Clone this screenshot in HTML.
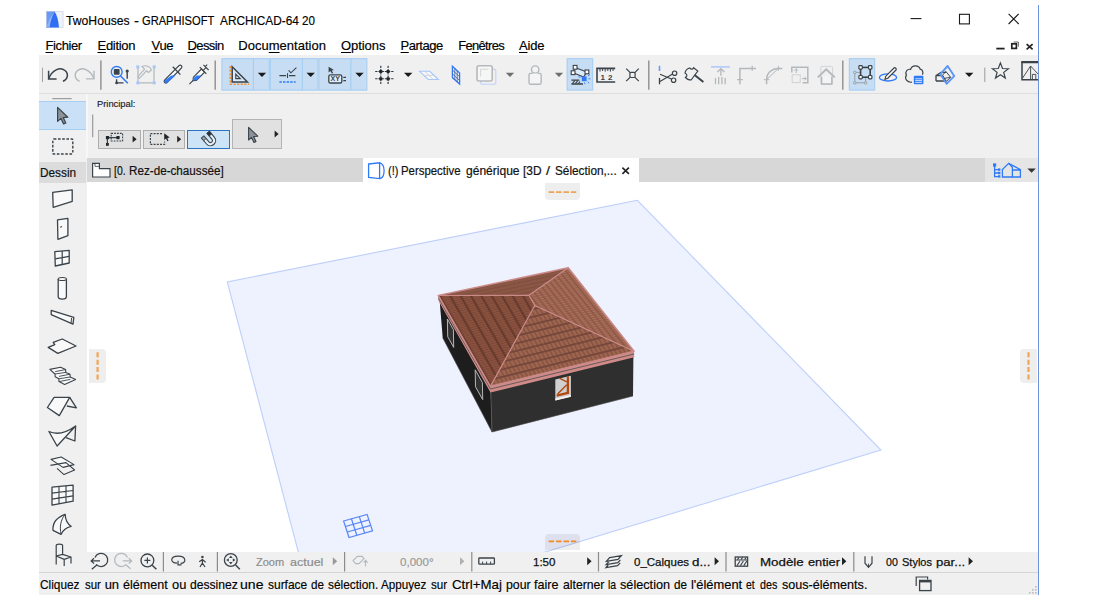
<!DOCTYPE html>
<html lang="fr">
<head>
<meta charset="utf-8">
<title>TwoHouses - GRAPHISOFT ARCHICAD-64 20</title>
<style>
html,body{margin:0;padding:0;}
body{width:1094px;height:607px;background:#fff;position:relative;overflow:hidden;font-family:"Liberation Sans",sans-serif;font-size:13px;color:#000;}
.abs{position:absolute;}
.t{position:absolute;white-space:nowrap;line-height:16px;height:16px;-webkit-text-stroke:0.18px #000;}
.g{background:#f0f0f0;}
.tl{position:absolute;left:0;white-space:nowrap;line-height:16px;height:16px;}
.tl span{position:absolute;top:0;transform-origin:0 50%;}
u{text-decoration:underline;text-underline-offset:1.5px;}
.hl{position:absolute;background:#c7dff5;border:1px solid #9dcbf0;box-sizing:border-box;}
.sep{position:absolute;width:1px;background:#8c8c8c;}
svg{position:absolute;overflow:visible;}
#scene{overflow:hidden;}
</style>
</head>
<body>
<!-- TITLE BAR -->
<!-- MENU -->
<div id="menu">
<div class="t" style="left:45.5px;top:38px;letter-spacing:-0.4px;"><u>F</u>ichier</div>
<div class="t" style="left:97.5px;top:38px;letter-spacing:-0.3px;"><u>E</u>dition</div>
<div class="t" style="left:151.5px;top:38px;letter-spacing:-0.3px;"><u>V</u>ue</div>
<div class="t" style="left:187.5px;top:38px;letter-spacing:-0.6px;"><u>D</u>essin</div>
<div class="t" style="left:238.3px;top:38px;letter-spacing:0.02px;">Docu<u>m</u>entation</div>
<div class="t" style="left:341px;top:38px;letter-spacing:-0.06px;"><u>O</u>ptions</div>
<div class="t" style="left:400.6px;top:38px;letter-spacing:-0.5px;"><u>P</u>artage</div>
<div class="t" style="left:458.2px;top:38px;letter-spacing:-0.69px;">Fe<u>n</u>êtres</div>
<div class="t" style="left:519px;top:38px;letter-spacing:-0.18px;"><u>A</u>ide</div>
</div>
<!-- TOOLBAR -->
<div id="toolbar" class="abs g" style="left:39px;top:55px;width:999px;height:38px;"></div>
<div class="abs" style="left:39px;top:93px;width:999px;height:1px;background:#dedede;"></div>
<!-- INFO BOX + LEFT PANEL -->
<div id="info" class="abs g" style="left:39px;top:94px;width:999px;height:64px;"></div>
<div id="left" class="abs g" style="left:39px;top:158px;width:48px;height:414px;"></div>
<div class="abs" style="left:86.4px;top:94px;width:1.6px;height:64px;background:#f7f7f7;"></div>
<!-- TAB BAR -->
<div id="tabbar" class="abs" style="left:87px;top:158px;width:951px;height:24px;background:#d7d7d7;"></div>
<!-- CANVAS -->
<div id="canvas" class="abs" style="left:87px;top:182px;width:951px;height:370px;background:#fff;overflow:hidden;"></div>

<!-- 3D SCENE -->
<svg id="scene" style="left:87px;top:182px" width="951" height="369.5" viewBox="87 182 951 369.5" fill="none">
<defs>
<pattern id="pFL" width="2.4" height="9.4" patternUnits="userSpaceOnUse" patternTransform="matrix(0.4973 0.8676 0.9714 -0.2374 490.4 386.4)">
<rect width="2.4" height="9.4" fill="#8d5341"/><rect width="1.0" height="9.4" fill="#7a4636"/><rect y="0" width="2.4" height="2.2" fill="#673a2d"/></pattern>
<pattern id="pFR" width="4.2" height="7.6" patternUnits="userSpaceOnUse" patternTransform="matrix(0.9714 -0.2374 0.4973 0.8676 490.4 386.4)">
<rect width="4.2" height="7.6" fill="#9d6450"/><rect width="1.5" height="7.6" fill="#87533f"/><rect y="0" width="4.2" height="1.8" fill="#74453a"/></pattern>
<pattern id="pBR" width="2.6" height="5.3" patternUnits="userSpaceOnUse" patternTransform="matrix(0.6189 0.7854 0.9780 -0.2086 634 351.3)">
<rect width="2.6" height="5.3" fill="#a96d58"/><rect width="1.0" height="5.3" fill="#96604d"/><rect y="0" width="2.6" height="1.5" fill="#8a5646"/></pattern>
<pattern id="pBL" width="2.4" height="4.2" patternUnits="userSpaceOnUse" patternTransform="matrix(0.9780 -0.2086 0.6189 0.7854 438.3 295.5)">
<rect width="2.4" height="4.2" fill="#8e5846"/><rect width="1.0" height="4.2" fill="#875342"/><rect y="0" width="2.4" height="1.2" fill="#7d4e3f"/></pattern>
</defs>
<!-- ground -->
<polygon points="637.4,200.3 227.3,282 316.6,621.6 880.9,450" fill="#eef2fe" stroke="#bdcffa" stroke-width="1.1"/>
<!-- ground grid marker -->
<g stroke="#4a7cf6" stroke-width="1.25" opacity="0.9">
<polygon points="343.6,521 367.1,514.4 372.5,530.9 349,537.5"/>
<path d="M351.4 518.8 L356.8 535.3 M359.3 516.6 L364.7 533.1 M345.4 526.5 L368.9 519.9 M347.2 532 L370.7 525.4"/>
</g>
<!-- walls -->
<polygon points="439.6,300.0 490.6,390.0 492.0,432.0 442.7,337.8" fill="#1d1d1d"/>
<polygon points="490.6,390.0 633.4,355.5 633.0,396.0 492.0,432.0" fill="#2f2f2f"/>
<path d="M490.8 390 L492 432" stroke="#555" stroke-width="0.8"/>
<path d="M442.7 337.8 L492 432 L633 396" stroke="#444" stroke-width="0.6"/>
<!-- left wall windows -->
<polygon points="447.4,319 453.4,329.6 453.7,347.4 447.7,336.6" fill="#333" stroke="#c4c4c4" stroke-width="0.9"/>
<polygon points="475.2,369.8 482.4,382.6 482.7,399.6 475.5,386.8" fill="#333" stroke="#c4c4c4" stroke-width="0.9"/>
<!-- front window -->
<polygon points="555.3,379.4 570.9,375.7 570.9,396.7 555.3,400.4" fill="#d0d0d0"/>
<polygon points="555.3,398.6 570.9,394.9 570.9,396.7 555.3,400.4" fill="#f2f2f2"/>
<path d="M567.9 376.4 V393.2" stroke="#b04a10" stroke-width="2.3"/>
<path d="M556.6 395.6 L569 392.6" stroke="#b04a10" stroke-width="2.4"/>
<path d="M566.8 384.7 L557.6 394 M559.8 378.3 L566.8 381.8" stroke="#b04a10" stroke-width="1.4"/>
<!-- fascia -->
<polygon points="438.3,295.5 490.4,386.4 634,351.3 634.2,357.3 490.5,392.4 438.3,300.4" fill="#d08b89"/>
<path d="M438.4 298 L490.5 389 L634.1 354" stroke="#5a5452" stroke-width="0.9" fill="none"/>
<!-- roof planes -->
<polygon points="438.3,295.5 490.4,386.4 534.8,305.5 529.0,295.3" fill="url(#pFL)"/>
<polygon points="490.4,386.4 634.0,351.3 534.8,305.5" fill="url(#pFR)"/>
<polygon points="568.2,267.8 634.0,351.3 534.8,305.5 529.0,295.3" fill="url(#pBR)"/>
<polygon points="438.3,295.5 568.2,267.8 529.0,295.3" fill="url(#pBL)"/>
<!-- hips and edges -->
<g stroke="#ca8a88" stroke-width="1.2" stroke-linejoin="round">
<path d="M438.3 295.5 L529 295.3 L568.2 267.8 M529 295.3 L534.8 305.5 L490.4 386.4 M534.8 305.5 L634 351.3"/>
<path d="M438.3 295.5 L490.4 386.4 L634 351.3 L568.2 267.8 Z" stroke-width="1.6"/>
</g>
</svg>

<!-- INFO BOX / TABS / LEFT PANEL CONTENT -->
<div class="abs" style="left:39px;top:101.2px;width:47.4px;height:28.6px;background:#c9e0f6;border-top:1px solid #a6cdf2;border-bottom:1px solid #a6cdf2;box-sizing:border-box;"></div>
<div class="abs" style="left:39px;top:162px;width:47px;height:21px;background:#dcdcdc;"></div>
<div class="abs" style="left:98.2px;top:130.2px;width:42.5px;height:18.8px;background:#e1e1e1;border:1px solid #adadad;box-sizing:border-box;"></div>
<div class="abs" style="left:142.8px;top:130.2px;width:42.2px;height:18.8px;background:#e1e1e1;border:1px solid #adadad;box-sizing:border-box;"></div>
<div class="abs" style="left:187.2px;top:130.2px;width:42.5px;height:18.8px;background:#cde4f7;border:1.2px solid #2a74c4;box-sizing:border-box;"></div>
<div class="abs" style="left:232.1px;top:119.4px;width:50.4px;height:29.6px;background:#e1e1e1;border:1px solid #b4b4b4;box-sizing:border-box;"></div>
<!-- tabs -->
<div class="abs" style="left:363.3px;top:158.4px;width:275.4px;height:24px;background:#fff;"></div>
<div class="abs" style="left:985.3px;top:158px;width:52.7px;height:24px;background:#e5e5e5;"></div>
<!-- drag handles -->
<div class="abs" style="left:545.4px;top:183px;width:34.2px;height:17px;background:rgba(0,0,0,0.065);border-radius:0 0 4px 4px;"></div>
<div class="abs" style="left:545.4px;top:533.5px;width:34.2px;height:16.3px;background:rgba(0,0,0,0.065);border-radius:4px 4px 0 0;"></div>
<div class="abs" style="left:88.8px;top:348.9px;width:17.1px;height:34px;background:rgba(0,0,0,0.065);border-radius:0 4px 4px 0;"></div>
<div class="abs" style="left:1020.3px;top:348.9px;width:16.8px;height:34px;background:rgba(0,0,0,0.065);border-radius:4px 0 0 4px;"></div>
<svg id="midicons" style="left:0;top:0" width="1094" height="607" viewBox="0 0 1094 607" fill="none">
<!-- handles dashes -->
<g stroke="#f4a352" stroke-width="1.8" stroke-dasharray="5.5 1.95">
<path d="M548.6 192.1 H576.3"/><path d="M548.6 541.4 H576.3" stroke="#f28c22"/></g>
<g stroke="#f4a352" stroke-width="2.2" stroke-dasharray="5 2.4"><path d="M97.6 352.3 V380"/><path d="M1028.5 352.3 V380"/>
</g>
<!-- left panel top line -->
<path d="M52.3 98.7 H71.7" stroke="#8c8c8c" stroke-width="1"/>
<!-- arrow tool -->
<path d="M57.6 107.4 V121.4 L61 118.4 L63.6 124 L65.8 123 L63.2 117.6 L67.8 117.2 Z" fill="#8d9398" stroke="#3a434a" stroke-width="1.2" stroke-linejoin="round"/>
<!-- marquee -->
<rect x="52.8" y="139" width="20" height="15" rx="1" stroke="#3a434a" stroke-width="1.4" stroke-dasharray="2.6 1.6"/>
<!-- info box vertical line -->
<path d="M92.7 114.4 V137.2" stroke="#9a9a9a" stroke-width="1.2"/>
<!-- btn1 icon -->
<rect x="111.2" y="133.4" width="11.4" height="7.6" stroke="#3a434a" stroke-width="1.1" stroke-dasharray="1.8 1.1"/>
<path d="M107.4 144.4 V137.6 H118" stroke="#3a434a" stroke-width="1.2"/>
<g fill="#1f262b"><rect x="105.9" y="136" width="3.2" height="3.2"/><rect x="116.4" y="136" width="3.2" height="3.2"/><rect x="106" y="143" width="2.8" height="2.8"/></g>
<path d="M132.6 135.8 L136.6 139.2 L132.6 142.6 Z" fill="#222"/>
<!-- btn2 icon -->
<path d="M162 133.6 H150.4 V144.4 H164.6 V141.6" stroke="#3a434a" stroke-width="1.2" stroke-dasharray="2 1.2"/>
<path d="M164.2 133.2 V140 L166 138.6 L167.4 141.2 L168.6 140.6 L167.3 138 L169.8 137.6 Z" fill="#1f262b"/>
<path d="M177.2 135.8 L181.2 139.2 L177.2 142.6 Z" fill="#222"/>
<!-- btn3 magnet -->
<g transform="rotate(-40 209.6 139.6)">
<path d="M204.4 133.2 V141 C204.4 147.6 214.8 147.6 214.8 141 V133.2 H211.6 V141 C211.6 143.6 207.6 143.6 207.6 141 V133.2 Z" stroke="#3a434a" stroke-width="1.1" fill="#e8f1fa"/>
<rect x="204.4" y="133.2" width="3.2" height="3.4" fill="#9aa0a4" stroke="#3a434a" stroke-width="0.8"/><rect x="211.6" y="133.2" width="3.2" height="3.4" fill="#2a3136" stroke="#3a434a" stroke-width="0.8"/>
</g>
<!-- btn4 cursor -->
<path d="M248.6 127.4 V140 L251.6 137.4 L254 142.4 L256 141.4 L253.6 136.6 L257.8 136.2 Z" fill="#8d9398" stroke="#3a434a" stroke-width="1.1" stroke-linejoin="round"/>
<path d="M274.6 130.6 L278.6 134 L274.6 137.4 Z" fill="#222"/>
<!-- tab1 icon -->
<path d="M92.6 177 V163.4 H99.4 V168.6 H110 V177 Z" stroke="#3a434a" stroke-width="1.2" fill="#fff"/>
<path d="M95 163.6 V166.4 H99.2" stroke="#3a434a" stroke-width="0.8"/>
<!-- tab2 icon -->
<path d="M368.6 164 L379.6 162.8 V178.6 L368.6 177.4 Z" stroke="#2f7af5" stroke-width="1.3" fill="#fff"/>
<path d="M379.6 162.8 C385.6 164 385.6 177.4 379.6 178.6" stroke="#2f7af5" stroke-width="1.3"/>
<!-- tab close -->
<path d="M622.4 167.6 L628.9 173.8 M628.9 167.6 L622.4 173.8" stroke="#222" stroke-width="1.6"/>
<!-- nav icon right -->
<g stroke="#2f7af5" stroke-width="1.3">
<path d="M994.6 165.4 V176.6 H998.6 M994.6 169.6 H998.6 M994.6 173 H998.6"/>
<rect x="993" y="163.4" width="3.2" height="3.2" fill="#2f7af5" stroke="none"/>
<rect x="998" y="168.4" width="2.4" height="2.4" fill="#2f7af5" stroke="none"/><rect x="998" y="171.8" width="2.4" height="2.4" fill="#2f7af5" stroke="none"/><rect x="998" y="175.2" width="2.4" height="2.4" fill="#2f7af5" stroke="none"/>
<path d="M1002.4 177 V169.6 L1008.6 163.4 L1012.4 167.2 V177 Z"/>
<path d="M1008.6 163.4 L1020.4 169.6 V177 H1012.4 M1012.4 170 H1020.4"/>
</g>
<path d="M1027.4 168.4 H1035.8 L1031.6 172.8 Z" fill="#333"/>
</svg>
<!-- BOTTOM BAR -->
<div id="bbar" class="abs g" style="left:87px;top:551.5px;width:951px;height:20.5px;"></div>
<div class="abs" style="left:39px;top:571.5px;width:999px;height:1px;background:#d5d5d5;"></div>
<!-- STATUS BAR -->
<div id="status" class="abs g" style="left:39px;top:572.5px;width:999px;height:22px;"></div>

<!-- TOP ICONS -->
<svg id="topicons" style="left:0;top:0" width="1094" height="607" viewBox="0 0 1094 607" fill="none" stroke-linecap="butt">
<defs>
<linearGradient id="lg1" x1="0" y1="0" x2="1" y2="1"><stop offset="0" stop-color="#5a8df2"/><stop offset="0.5" stop-color="#a9c4f8"/><stop offset="1" stop-color="#ffffff"/></linearGradient>
</defs>
<!-- app icon -->
<rect x="46.3" y="11.3" width="16.8" height="16.4" fill="#eef2fc" stroke="#c9cfdd" stroke-width="0.6"/>
<path d="M46.6 11.6 H55 Q50 17 46.6 27.4 Z" fill="#6a9af3"/>
<path d="M46.6 27.4 Q50.5 14 54.6 11.8 Q58 16 59 27.4 Z" fill="#2f6ff2"/>
<path d="M46.6 27.4 Q49.5 16 54.6 11.8 Q51 18 49.6 27.4 Z" fill="#8fb3f7"/>
<!-- window controls -->
<g stroke="#1a1a1a" stroke-width="1.1">
<path d="M910.6 18.6 H921.4"/>
<rect x="959.5" y="14.3" width="9.9" height="9.6"/>
<path d="M1008.6 13.9 L1018.7 24 M1018.7 13.9 L1008.6 24"/>
</g>
<!-- MDI controls -->
<g stroke="#222" stroke-width="1.6">
<path d="M996.3 48.6 H1004.6" stroke-width="1.8"/>
<rect x="1011.8" y="43.8" width="4.6" height="4.6" stroke-width="1.7"/>
<path d="M1013.6 42 H1018.4 V46.6" stroke-width="0.9" stroke="#555"/>
<path d="M1026.6 44.2 L1032.6 49.4 M1032.6 44.2 L1026.6 49.4" stroke-width="1.7"/>
</g>
</svg>

<!-- TOOLBAR ICONS -->
<svg id="tbicons" style="left:0;top:0" width="1094" height="607" viewBox="0 0 1094 607" fill="none" stroke-linecap="butt" stroke-linejoin="miter">
<!-- grip -->
<path d="M42.5 67.8 V82" stroke="#a0a0a0" stroke-width="1"/>
<!-- undo -->
<path d="M48.6 78.8 C52 70 60 66.5 65 70.5 C69.5 74.5 67 80 63 81.3" stroke="#3a434a" stroke-width="1.5"/>
<path d="M48.6 70.8 V78.9 H56.6" stroke="#3a434a" stroke-width="1.5"/>
<!-- redo -->
<path d="M94 78.8 C90.6 70 82.6 66.5 77.6 70.5 C73.1 74.5 75.6 80 79.6 81.3" stroke="#b3b8bc" stroke-width="1.4"/>
<path d="M94 70.8 V78.9 H86" stroke="#b3b8bc" stroke-width="1.4"/>
<!-- separators -->
<g stroke="#8e8e8e" stroke-width="1.4"><path d="M100.9 60.5 V89.7 M215.2 60.5 V89.7 M648.8 60.5 V89.7 M842.8 60.5 V89.7"/></g>
<path d="M984.8 67.6 V82.1" stroke="#9a9a9a" stroke-width="1"/>
<!-- find & select -->
<rect x="113.8" y="69" width="5.8" height="5.8" rx="1" fill="#3a434a"/>
<circle cx="116.7" cy="71.9" r="5.4" stroke="#2f7af5" stroke-width="1.4"/>
<path d="M120.6 76 L127.8 83.2" stroke="#2f7af5" stroke-width="1.6"/>
<path d="M127.2 71 V78.8" stroke="#3a434a" stroke-width="1.4"/><circle cx="127.2" cy="71" r="1.6" fill="#3a434a"/>
<path d="M116.6 79.2 V82.9 H123.5" stroke="#3a434a" stroke-width="1.4"/><circle cx="116.6" cy="82.9" r="1.4" fill="#3a434a"/>
<!-- hammer/selection (gray) -->
<path d="M138 67.5 V82.9 H154 V67.5" stroke="#b3b8bc" stroke-width="1.2"/>
<path d="M142 66.5 C146 64.8 150 66.5 151.5 70 L148.5 72.5 L146.5 70.8 L139.5 78.3 L137.8 76.7 L144.6 69.2 Z" stroke="#b3b8bc" stroke-width="1.1" fill="#f0f0f0"/>
<g fill="#a6c6fb"><rect x="136.3" y="65.4" width="3" height="3"/><rect x="152.7" y="65.4" width="3" height="3"/><rect x="136.3" y="81.4" width="3" height="3"/><rect x="152.7" y="81.4" width="3" height="3"/></g>
<!-- eyedropper -->
<path d="M176.5 68.2 L164.6 80.2 C163.2 81.8 165.4 84 167 82.5 L179 70.6" stroke="#3a434a" stroke-width="1.2" fill="#fafafa"/>
<path d="M171.5 75.6 L175.6 75.6 L167 83 C165.4 84 163.6 82 164.8 80.6 Z" fill="#2f7af5"/>
<path d="M176 68.6 L179.2 65.5 C180.6 64.2 182.8 66.2 181.5 67.8 L178.5 71" stroke="#3a434a" stroke-width="1.2" fill="#fafafa"/>
<path d="M172.8 66.8 L180.4 74.6" stroke="#3a434a" stroke-width="1.3"/>
<!-- syringe -->
<path d="M201.5 69 L193.4 77.2 L193 80.6 L196.4 80.4 L204.6 72.2 Z" stroke="#3a434a" stroke-width="1.1" fill="#fafafa"/>
<path d="M196.6 75.6 L201.2 75.6 L196.4 80.4 L193 80.6 L193.4 78.2 Z" fill="#2f7af5"/>
<path d="M193.2 80.4 L189.4 84.2" stroke="#3a434a" stroke-width="1.1"/>
<path d="M199.8 67.2 L206.4 73.8 M203 70.6 L206.4 67.2 M203.4 64.8 L208.6 70 M205.4 66.4 L207.2 64.6" stroke="#3a434a" stroke-width="1.1"/>
<!-- highlight group 1 -->
<rect x="221.9" y="58.7" width="47.400000000000006" height="31.4" fill="#c6ddf3" stroke="#a2ccf2" stroke-width="1"/><path d="M253.4 58.7 V90.1" stroke="#a2ccf2" stroke-width="1"/>
<path d="M230.2 66 V84.3 H249.2" stroke="#f2963a" stroke-width="1.6" stroke-dasharray="2.2 1.4"/>
<path d="M232.2 66.8 V82 H247.4 Z" stroke="#3a434a" stroke-width="1.5" fill="#dcebf9"/>
<path d="M235.8 74.2 V78.6 H240.2 Z" stroke="#3a434a" stroke-width="1.2"/>
<path d="M257.8 72.8 H266.2 L262 77 Z" fill="#1a1a1a" stroke="none"/>
<!-- highlight group 2 -->
<rect x="270.3" y="58.7" width="47.599999999999966" height="31.4" fill="#c6ddf3" stroke="#a2ccf2" stroke-width="1"/><path d="M302.3 58.7 V90.1" stroke="#a2ccf2" stroke-width="1"/>
<path d="M279.4 75.6 H286 M289 75.6 H295.4 M287.5 73.2 V78" stroke="#3a434a" stroke-width="1.1"/>
<path d="M288.6 70.4 L290.9 72.8 L296.4 67.6" stroke="#3a434a" stroke-width="1.1"/>
<path d="M279.4 82 H295.6" stroke="#2f7af5" stroke-width="1.4" stroke-dasharray="2.4 1.2"/>
<path d="M306.5 72.8 H314.9 L310.7 77 Z" fill="#1a1a1a" stroke="none"/>
<!-- highlight group 3 -->
<rect x="318.9" y="58.7" width="48.0" height="31.4" fill="#c6ddf3" stroke="#a2ccf2" stroke-width="1"/><path d="M350.9 58.7 V90.1" stroke="#a2ccf2" stroke-width="1"/>
<path d="M328.6 66.8 V72.6 L330.3 71 L332 73.6 L333.2 72.9 L331.7 70.4 L333.9 70 Z" fill="#3a434a"/>
<rect x="328.8" y="74.8" width="13" height="8.2" rx="1.6" stroke="#3a434a" stroke-width="1.3" fill="#e4eef9"/>
<path d="M343.3 77.4 H346 M343.3 80.6 H346" stroke="#3a434a" stroke-width="1.2"/>
<text x="330.6" y="81.4" font-family="Liberation Sans, sans-serif" font-weight="bold" font-size="6.4" fill="#3a434a" stroke="none" textLength="9.4" lengthAdjust="spacingAndGlyphs">XY</text>
<path d="M355.3 72.8 H363.7 L359.5 77 Z" fill="#1a1a1a" stroke="none"/>
<!-- grid snap -->
<g stroke="#2c343a" stroke-width="1.1" stroke-dasharray="2.3 0.9"><path d="M380.8 65.8 V84 M388.1 65.8 V84 M375.2 71.5 H393.8 M375.2 78.8 H393.8"/></g>
<g fill="#1f262b"><rect x="379.3" y="70" width="3" height="3"/><rect x="386.6" y="70" width="3" height="3"/><rect x="379.3" y="77.3" width="3" height="3"/><rect x="386.6" y="77.3" width="3" height="3"/></g>
<path d="M404.0 72.8 H412.4 L408.2 77 Z" fill="#1a1a1a" stroke="none"/>
<!-- editing plane (light) -->
<path d="M419.6 71.3 H429.8 L438.4 79.5 H428.2 Z" stroke="#a6c6fb" stroke-width="1.1" fill="#f6f8fc"/>
<path d="M423.9 75.4 H434.1 M424.7 71.3 L433.3 79.5" stroke="#cfd3d6" stroke-width="0.9"/>
<!-- vertical grid blue -->
<path d="M452.4 66.2 L459.6 73 V84 L452.4 77.6 Z" stroke="#2f7af5" stroke-width="1.3" fill="#f4f4f4"/>
<path d="M454.8 68.6 V79.8 M457.2 70.8 V82 M452.4 70 L459.6 76.8 M452.4 73.8 L459.6 80.4" stroke="#3c5a9a" stroke-width="0.8"/>
<!-- layered squares gray -->
<rect x="480.6" y="69.4" width="15.2" height="14.8" rx="1.5" stroke="#bcd3f8" stroke-width="1.1"/>
<rect x="477" y="65.8" width="15.2" height="15.2" rx="2" stroke="#b6b9bc" stroke-width="1.6" fill="#f6f6f6"/>
<path d="M480.6 76.6 V69.2 H488.4" stroke="#cfd2d4" stroke-width="0.9"/>
<path d="M505.8 72.8 H514.2 L510 77 Z" fill="#6f6f6f" stroke="none"/>
<!-- lock gray -->
<circle cx="535.2" cy="69.6" r="3.7" stroke="#b3b8bc" stroke-width="1.4" fill="#f4f4f4"/>
<path d="M532.6 73.4 H530.6 C529.6 73.4 529 74 529 75 V82.6 C529 83.6 529.6 84.2 530.6 84.2 H539.6 C540.6 84.2 541.2 83.6 541.2 82.6 V75 C541.2 74 540.6 73.4 539.6 73.4 H537.8" stroke="#b3b8bc" stroke-width="1.4" fill="#f4f4f4"/>
<path d="M554.8 72.8 H563.2 L559 77 Z" fill="#6f6f6f" stroke="none"/>
<!-- highlight: trace -->
<rect x="567.1" y="58.7" width="25.600000000000023" height="31.4" fill="#c6ddf3" stroke="#a2ccf2" stroke-width="1"/>
<path d="M575 67.4 L586.8 72 L583.6 77 L573.2 72.8 Z" stroke="#3a434a" stroke-width="1.1" fill="#dcebf9"/>
<g stroke="#3a434a" stroke-width="1.1" fill="#fff"><rect x="573.2" y="65.4" width="3.8" height="3.8"/><rect x="571.2" y="70.8" width="3.8" height="3.8"/><rect x="585" y="70" width="3.8" height="3.8"/></g>
<rect x="581.8" y="76.4" width="4.8" height="4.8" fill="#2f7af5"/>
<path d="M588 76 L590 74.6 M588.4 78.8 H590.4 M587.6 81.8 L589.2 83.2 M584.4 82.4 L585 84.2 M580.4 77.4 L578.4 76.8" stroke="#2f7af5" stroke-width="0.9"/>
<path d="M571.4 80.2 H579.4 M571.4 84 H583" stroke="#3a434a" stroke-width="1.3"/>
<path d="M572.4 83.6 L575 80.4 M575.4 83.6 L578 80.4 M578.4 83.6 L580 81.6" stroke="#3a434a" stroke-width="1.1"/>
<!-- ruler 12 -->
<path d="M615.2 68.4 H597 V82 H615.2" stroke="#3a434a" stroke-width="1.6"/>
<path d="M600 69 V71.6 M602.6 69 V71 M605.2 69 V71.6 M607.8 69 V71 M610.4 69 V71.6 M613 69 V71" stroke="#3a434a" stroke-width="1"/>
<text x="600.4" y="80.3" font-family="Liberation Sans, sans-serif" font-weight="bold" font-size="8" fill="#3a434a" stroke="none" textLength="12" lengthAdjust="spacing">12</text>
<!-- explode X -->
<path d="M626.2 68.6 L638.8 81.2 M638.8 68.6 L626.2 81.2" stroke="#3a434a" stroke-width="1.2"/>
<rect x="629.9" y="72.3" width="5.2" height="5.2" rx="1.2" stroke="#3a434a" stroke-width="1.2" fill="#f0f0f0"/>
<!-- scissors -->
<path d="M659.5 65.8 V71" stroke="#6a9df8" stroke-width="1.6"/><path d="M659.5 77.9 V84.3" stroke="#3a434a" stroke-width="1.3"/>
<path d="M660 74.2 L671.4 79 M660 81.6 L672.6 74" stroke="#3a434a" stroke-width="1.2"/>
<circle cx="674.6" cy="73.2" r="2.2" stroke="#3a434a" stroke-width="1.2"/><circle cx="673.6" cy="80.2" r="2.2" stroke="#3a434a" stroke-width="1.2"/>
<!-- axe -->
<path d="M689.6 68 C691.6 69.8 693 69.2 693.6 67.8 L697.8 71 L694 76 L691.2 80 C689 80 686.6 79 685.4 77.4 C687.4 76.4 687.6 74.8 685 73 C685.4 70.8 687.4 68.6 689.6 68 Z" stroke="#3a434a" stroke-width="1.2" fill="#f0f0f0"/>
<path d="M694.6 75 L703.4 82" stroke="#3a434a" stroke-width="2"/>
<!-- adjust (gray) -->
<path d="M711 66.9 H729.8" stroke="#a6c6fb" stroke-width="1.4"/>
<path d="M720.9 68.6 V75.8 M717.4 72 L720.9 68.6 L724.4 72" stroke="#b3b8bc" stroke-width="1.3"/>
<path d="M715.5 78 V84.3 M718.7 77 V84.3 M721.9 77 V84.3 M725.2 78 V84.3" stroke="#b3b8bc" stroke-width="1.3"/>
<!-- corner (gray) -->
<path d="M739.9 84.3 V68.4 H756" stroke="#b3b8bc" stroke-width="1.5"/>
<path d="M752.2 65.8 V70.8 M737.1 79.7 H742.7" stroke="#b3b8bc" stroke-width="1.2"/>
<!-- arc (gray) -->
<path d="M766.6 84.3 V79.8 C766.6 73 771.8 68.4 778.6 68.4 H782.4" stroke="#b3b8bc" stroke-width="1.5"/>
<path d="M778.4 65.8 V70.8 M763.8 79.7 H769.4 M766.8 79.4 L778.2 68.6" stroke="#b3b8bc" stroke-width="1"/>
<!-- squares arrows (gray) -->
<path d="M791.8 72.4 V67.2 H807.8 V82.8 H802.6" stroke="#b3b8bc" stroke-width="1.5"/>
<rect x="792.2" y="74.8" width="8" height="7.8" stroke="#cfd2d4" stroke-width="1"/>
<path d="M796.2 73 V68.8 M794.4 70.6 L796.2 68.8 L798 70.6 M802 78.6 H806.2 M804.4 76.8 L806.2 78.6 L804.4 80.4" stroke="#b3b8bc" stroke-width="1"/>
<!-- house (gray) -->
<rect x="820.8" y="66.4" width="11.8" height="17.8" rx="1" stroke="#d2d4d6" stroke-width="1"/>
<path d="M821.6 76.4 V84 H831.8 V76.4" stroke="#b3b8bc" stroke-width="1.4" fill="#f4f4f4"/>
<path d="M817.8 77.4 L826.2 69.4 L834.8 77.4" stroke="#b3b8bc" stroke-width="1.9"/>
<!-- highlight: group -->
<rect x="849.3" y="58.7" width="25.40000000000009" height="31.4" fill="#c6ddf3" stroke="#a2ccf2" stroke-width="1"/>
<g stroke="#9aa0a5" stroke-width="1"><rect x="854.8" y="72.4" width="10.8" height="10.4"/><circle cx="854.8" cy="72.4" r="1.3" fill="#c6ddf3"/><circle cx="865.6" cy="72.4" r="1.3" fill="#c6ddf3"/><circle cx="854.8" cy="82.8" r="1.3" fill="#c6ddf3"/><circle cx="865.6" cy="82.8" r="1.3" fill="#c6ddf3"/></g>
<rect x="860.6" y="67.4" width="9.6" height="9.8" stroke="#3a434a" stroke-width="1.6" fill="#c6ddf3"/>
<g stroke="#3a434a" stroke-width="1.2" fill="#fff"><rect x="858.9" y="65.7" width="3.4" height="3.4" rx="0.8"/><rect x="868.5" y="65.7" width="3.4" height="3.4" rx="0.8"/><rect x="858.9" y="75.5" width="3.4" height="3.4" rx="0.8"/><rect x="868.5" y="75.5" width="3.4" height="3.4" rx="0.8"/></g>
<!-- pencil w/ blue ellipse -->
<ellipse cx="888" cy="77.4" rx="8.6" ry="3.6" stroke="#2f7af5" stroke-width="1.3"/>
<path d="M885 79.2 L885.8 76.2 L894 68 C895 67 897 69 896 70 L887.8 78.2 Z" stroke="#3a434a" stroke-width="1.2" fill="#fafafa"/>
<!-- cloud -->
<path d="M912 82.2 C907 82.8 904.2 78.6 906.4 75.2 C904.6 71.6 907.6 68.6 910.6 69.4 C912 65 918.6 64.6 920.2 69.2 C922.6 69.6 923.6 72.4 922.4 74.6" stroke="#3a434a" stroke-width="1.2"/>
<rect x="913.8" y="75.8" width="9.6" height="8.4" rx="1" fill="#2f7af5"/>
<path d="M915.2 78.8 H922 M915.2 80.6 H922 M915.2 82.4 H922" stroke="#dfe9fd" stroke-width="0.9"/>
<!-- 3D diamond -->
<path d="M936 81 V75.6 L941 72.4 H946" stroke="#3a434a" stroke-width="1.3"/>
<path d="M936 81 H945.4 M936 75.6 H941.4" stroke="#3a434a" stroke-width="1.3"/>
<path d="M947.6 66 L954.2 76.1 L946.6 83.8 L940.4 74.2 Z" stroke="#5b95f7" stroke-width="1.9" stroke-linejoin="round"/>
<path d="M945.8 71.4 L950.6 77.2 L946.4 81.4 L942.6 75.2 Z" stroke="#3a434a" stroke-width="1" stroke-linejoin="round"/>
<path d="M944.6 78.4 L950.6 77.2" stroke="#3a434a" stroke-width="0.9"/>
<path d="M965 72.8 H973.4 L969.2 77 Z" fill="#1a1a1a" stroke="none"/>
<!-- star -->
<path d="M1000.4 62.9 L1002.5 68.5 L1008.4 68.7 L1003.7 72.4 L1005.3 78.1 L1000.4 74.8 L995.5 78.1 L997.1 72.4 L992.4 68.7 L998.3 68.5 Z" stroke="#3a434a" stroke-width="1.2" stroke-linejoin="miter"/>
<!-- box icon at right (clipped) -->
<g>
<path d="M1038 62.4 H1022 V79.8 H1038" stroke="#3a434a" stroke-width="1.5"/>
<path d="M1021.3 62 H1038" stroke="#3a434a" stroke-width="2"/>
<path d="M1022.6 78 L1030.6 66 V79 M1030.6 66 L1038 74 M1032.4 79 V74.4 H1035.8 V79" stroke="#3a434a" stroke-width="0.9"/>
</g>
</svg>

<!-- LEFT TOOL ICONS -->
<svg id="lefticons" style="left:0;top:0" width="1094" height="607" viewBox="0 0 1094 607" fill="none" stroke="#3a434a" stroke-width="1.3" stroke-linejoin="round">
<path d="M52.7 192.4 L72.2 189.8 V201.4 L53.2 207.4 Z" fill="#f9f9f9"/>
<path d="M57.5 219.9 L67.9 218.4 V235.6 L57.9 239.3 Z" fill="#f9f9f9"/><path d="M60.2 227.2 L62 226.4" stroke-width="1.1"/>
<path d="M54.8 251.6 L69.2 250.3 V263 L55.3 266 Z" fill="#f9f9f9"/><path d="M62.2 251 V264.5 M55.1 258.8 L69.2 256.4" stroke-width="1.2"/>
<path d="M58.2 279 V296.6 C58.2 300 66.4 300 66.4 296.6 V279" fill="#f9f9f9"/><ellipse cx="62.3" cy="279" rx="4.1" ry="1.5" fill="#f9f9f9" stroke-width="1.1"/>
<path d="M51.2 310.4 L73.8 317.4 L73 324.2 L51.2 314.6 Z" fill="#f9f9f9"/><path d="M71.6 318 L71 323.4" stroke-width="1"/>
<path d="M62.3 339 L76 346 L57.8 353.4 L48.2 347.4 L54.8 344.6 L53.2 342.4 Z" fill="#f9f9f9"/>
<!-- stair -->
<path d="M49.8 369.4 L60.6 367.2 L65.6 369.6 L65.8 372.4 L70 374.2 L70.2 377 L75.6 379.6 L64.6 384.4 L59 381.6 L58.8 378.8 L55.2 376.8 L55 374 Z" fill="#f9f9f9" stroke-width="1.1"/>
<path d="M55 374 L65.8 372.4 M55.2 371.6 L65.6 369.6 M58.8 378.8 L70.2 377 M59 376.4 L70 374.2 M59 381.6 L70.4 379.4" stroke-width="0.9"/>
<!-- roof -->
<path d="M47.4 407.5 L54.1 397.4 H69.7 L59.3 415.6 Z" fill="#f9f9f9"/><path d="M69.7 397.4 L76.4 407.8 L66.8 406" />
<!-- shell -->
<path d="M48.9 431.5 C58 435.5 66 433 75.6 426 L57.1 446 Z" fill="#f9f9f9"/><path d="M75.6 426 L74.9 441 L66 437.6"/>
<!-- skylight -->
<path d="M51 459.4 L61.2 457 L74 464.6 L63 467.4 Z" fill="#f9f9f9" stroke-width="1.1"/>
<path d="M50.4 465.4 L66 462.6 L74.6 470 L64 474.6 L57 468.4" stroke-width="1.1"/>
<!-- curtain wall -->
<path d="M52 487.1 L73.1 485.1 V501.2 L52 505.2 Z" fill="#f9f9f9"/>
<path d="M59 486.5 V503.9 M66 485.8 V502.5 M52 493.1 L73.1 490.5 M52 499.1 L73.1 495.9" stroke-width="1.1"/>
<!-- morph -->
<path d="M53 530.3 C52.6 525 55 518 65.1 514.3 C65.4 520 67.6 524 71.1 526.3 C66.4 527.4 63 530 61.1 534.3 Z" fill="#f9f9f9"/>
<path d="M65.1 514.3 C60.6 520 59.4 527 61.1 534.3" stroke-width="1"/>
<!-- chair -->
<path d="M56.2 564.4 V545.6 C56.2 543.6 62.6 543.6 62.6 545.6 V554.6 M56.2 556 L62.6 554.4 L71 557 L64.2 559.4 Z M64.2 559.4 V566 M71 557 V563.6" stroke-width="1.2"/>
</svg>
<!-- BOTTOM BAR ICONS -->
<svg id="boticons" style="left:0;top:0" width="1094" height="607" viewBox="0 0 1094 607" fill="none" stroke="#3a434a" stroke-width="1.3">
<g stroke="#8c8c8c" stroke-width="1.2"><path d="M163.4 552 V571.4 M217.4 552 V571.4 M344.6 552 V571.4 M471.8 552 V571.4 M598.5 552 V571.4 M726 552 V571.4 M853.8 552 V571.4"/></g>
<!-- zoom prev -->
<path d="M96.2 564.4 A6.6 6.6 0 1 0 95 557.4" /><path d="M91.2 560.9 H100 M94 558.2 L91.2 560.9 L94 563.6 M96.8 565 L91.8 569.2"/>
<!-- zoom next gray -->
<g stroke="#b3b8bc"><path d="M126.2 564.4 A6.6 6.6 0 1 1 127.4 557.4"/><path d="M131.6 560.9 H122.8 M128.8 558.2 L131.6 560.9 L128.8 563.6 M126 565 L130.6 568.8"/></g>
<!-- zoom in -->
<circle cx="147.4" cy="560.4" r="6.4"/><path d="M144.4 560.4 H150.4 M147.4 557.4 V563.4" stroke-width="1.2"/><path d="M152.2 565.2 L156.4 569.2" stroke-width="1.5"/>
<!-- orbit -->
<path d="M177 563.2 C169.6 563 170 556.2 178.2 556.2 C186.6 556.2 186.6 563.4 180.6 563.4" stroke-width="1.2"/><path d="M178 560.8 V564.8 H181.6" stroke-width="1.2"/>
<!-- walker -->
<circle cx="202.4" cy="557" r="1.3" fill="#3a434a" stroke="none"/><path d="M202.4 559 V563 L200 567 M202.4 563 L205 567 M199.2 561.8 L202.4 559.6 L205.6 562.2" stroke-width="1.2"/>
<!-- fit zoom -->
<circle cx="230.8" cy="560" r="6.4"/><path d="M235.6 565 L239.8 569.2" stroke-width="1.5"/>
<g fill="#3a434a" stroke="none"><path d="M229 558 H232.6 L230.8 555.4 Z M229 562 H232.6 L230.8 564.6 Z M228.8 558.2 V561.8 L226.2 560 Z M232.8 558.2 V561.8 L235.4 560 Z"/></g>
<!-- arrows -->
<path d="M332.8 557.2 L337.2 561.2 L332.8 565.2 Z" fill="#9a9a9a" stroke="none"/>
<path d="M460.0 557.2 L464.4 561.2 L460.0 565.2 Z" fill="#b0b0b0" stroke="none"/>
<path d="M587.2 557.2 L591.6 561.2 L587.2 565.2 Z" fill="#222" stroke="none"/>
<path d="M714.6 557.2 L719.0 561.2 L714.6 565.2 Z" fill="#222" stroke="none"/>
<path d="M842.0 557.2 L846.4 561.2 L842.0 565.2 Z" fill="#222" stroke="none"/>
<path d="M968.6 557.2 L973.0 561.2 L968.6 565.2 Z" fill="#222" stroke="none"/>
<!-- rotate icon gray -->
<g stroke="#b3b8bc" stroke-width="1.1"><path d="M353 560.6 L357.4 556.4 L362 556.4 L364 558.6 L359 563.6 L355.6 563.6 Z"/><path d="M365.6 566.4 V560.6 M363.6 562.6 L365.6 560.4 L367.6 562.6"/></g>
<!-- scale icon -->
<rect x="478.8" y="558" width="15.6" height="6.2" rx="0.8" stroke-width="1.3"/><path d="M482.6 564 V561.6 M486.6 564 V561.6 M490.6 564 V561.6" stroke-width="1"/>
<!-- layers icon -->
<path d="M609.6 557.6 L621.4 555.6 L618 559.4 L606.4 561.4 Z M608.6 562 L606.2 564.6 L617.8 562.6 L620.4 559.8 M608.2 565.2 L606 567.6 L617.6 565.6 L620.2 562.8" stroke-width="1.2"/>
<!-- model icon -->
<rect x="735.2" y="557" width="12.4" height="9.2" stroke-width="1.3"/><path d="M735.2 560 H747.6" stroke-width="1"/><path d="M737 565.6 L740 561 M740.4 565.6 L743.4 561 M743.8 565.6 L746.8 561 M737.4 559.6 L739 557.4 M741 559.6 L742.6 557.4 M744.6 559.6 L746.2 557.4" stroke-width="1.1"/>
<!-- pen icon -->
<path d="M865 556.2 V563.2 L868.5 567.4 L872 563.2 V556.2" stroke-width="1.2"/><path d="M868.5 567.4 V563.6" stroke-width="0.9"/>
<!-- status window icon -->
<path d="M916.2 586 V577 H927.6 V579.6" stroke-width="1.2"/><rect x="919.6" y="580.4" width="11.4" height="10.2" stroke-width="1.3" fill="#f0f0f0"/><path d="M919.6 581.4 H931" stroke-width="2"/>
<!-- resize grip -->
<g fill="#bcbcbc" stroke="none"><rect x="1035" y="586" width="1.6" height="1.6"/><rect x="1032" y="589" width="1.6" height="1.6"/><rect x="1035" y="589" width="1.6" height="1.6"/><rect x="1029" y="592" width="1.6" height="1.6"/><rect x="1032" y="592" width="1.6" height="1.6"/><rect x="1035" y="592" width="1.6" height="1.6"/></g>
</svg>
<!-- TEXTS -->
<!--T0-->
<div id="title" class="tl" style="top:12.5px;font-size:13px;color:#000;-webkit-text-stroke:0.15px #000;">
<span style="left:66.37px;transform:scaleX(0.937)">TwoHouses</span> <span style="left:133.96px;transform:scaleX(1.15)">-</span> <span style="left:142.46px;transform:scaleX(0.855)">GRAPHISOFT</span> <span style="left:219.5px;transform:scaleX(0.909)">ARCHICAD-64</span> <span style="left:302.45px;transform:scaleX(0.896)">20</span>
</div>
<div id="status" class="tl" style="top:577.3px;font-size:13px;color:#000;-webkit-text-stroke:0.15px #000;">
<span style="left:40.32px;transform:scaleX(0.91)">Cliquez</span> <span style="left:84.86px;transform:scaleX(0.88)">sur</span> <span style="left:104.65px;transform:scaleX(1.0)">un</span> <span style="left:123.02px;transform:scaleX(0.966)">élément</span> <span style="left:172.21px;transform:scaleX(0.989)">ou</span> <span style="left:189.73px;transform:scaleX(0.933)">dessinez</span> <span style="left:240.39px;transform:scaleX(1.081)">une</span> <span style="left:267.74px;transform:scaleX(0.92)">surface</span> <span style="left:310.95px;transform:scaleX(0.896)">de</span> <span style="left:327.64px;transform:scaleX(0.915)">sélection.</span> <span style="left:381.2px;transform:scaleX(0.896)">Appuyez</span> <span style="left:430.55px;transform:scaleX(0.897)">sur</span> <span style="left:452.23px;transform:scaleX(1.022)">Ctrl+Maj</span> <span style="left:505.59px;transform:scaleX(0.948)">pour</span> <span style="left:534.26px;transform:scaleX(0.967)">faire</span> <span style="left:562.53px;transform:scaleX(0.94)">alterner</span> <span style="left:607.8px;transform:scaleX(0.8)">la</span> <span style="left:620.41px;transform:scaleX(0.976)">sélection</span> <span style="left:674.05px;transform:scaleX(0.896)">de</span> <span style="left:691.06px;transform:scaleX(0.991)">l'élément</span> <span style="left:746.4px;transform:scaleX(0.8)">et</span> <span style="left:759.79px;transform:scaleX(0.825)">des</span> <span style="left:781.82px;transform:scaleX(0.969)">sous-éléments.</span>
</div>
<div id="bb1" class="tl" style="top:553.9px;font-size:11.6px;color:#8c8c8c;-webkit-text-stroke:0.2px #8c8c8c;">
<span style="left:256.26px;transform:scaleX(0.95)">Zoom</span> <span style="left:289.76px;transform:scaleX(1.079)">actuel</span>
</div>
<div id="bb2" class="tl" style="top:553.9px;font-size:11.6px;color:#9a9a9a;-webkit-text-stroke:0.2px #9a9a9a;">
<span style="left:400.0px;transform:scaleX(1.0)">0,000°</span>
</div>
<div id="bb3" class="tl" style="top:553.9px;font-size:11.6px;color:#111;-webkit-text-stroke:0.25px #111;">
<span style="left:532.85px;transform:scaleX(0.995)">1:50</span>
</div>
<div id="bb4" class="tl" style="top:553.9px;font-size:11.6px;color:#111;-webkit-text-stroke:0.25px #111;">
<span style="left:634.2px;transform:scaleX(0.993)">0_Calques</span> <span style="left:692.24px;transform:scaleX(1.15)">d...</span>
</div>
<div id="bb5" class="tl" style="top:553.9px;font-size:11.6px;color:#111;-webkit-text-stroke:0.25px #111;">
<span style="left:760.26px;transform:scaleX(1.15)">Modèle</span> <span style="left:808.45px;transform:scaleX(1.101)">entier</span>
</div>
<div id="bb6" class="tl" style="top:553.9px;font-size:11.6px;color:#111;-webkit-text-stroke:0.25px #111;">
<span style="left:885.94px;transform:scaleX(0.917)">00</span> <span style="left:901.93px;transform:scaleX(0.95)">Stylos</span> <span style="left:935.75px;transform:scaleX(1.133)">par...</span>
</div>
<div id="tab1" class="tl" style="top:162.6px;font-size:12.5px;color:#111;-webkit-text-stroke:0.2px #111;">
<span style="left:113.58px;transform:scaleX(0.833)">[0.</span> <span style="left:128.87px;transform:scaleX(0.934)">Rez-de-chaussée]</span>
</div>
<div id="tab2" class="tl" style="top:162.6px;font-size:12.5px;color:#111;-webkit-text-stroke:0.2px #111;">
<span style="left:388.24px;transform:scaleX(0.878)">(!)</span> <span style="left:401.29px;transform:scaleX(0.911)">Perspective</span> <span style="left:465.72px;transform:scaleX(0.963)">générique</span> <span style="left:523.08px;transform:scaleX(0.953)">[3D</span> <span style="left:546.14px;transform:scaleX(1.15)">/</span> <span style="left:554.53px;transform:scaleX(0.944)">Sélection,...</span>
</div>
<div id="dessin" class="tl" style="top:164.6px;font-size:13px;color:#111;-webkit-text-stroke:0.2px #111;">
<span style="left:40.29px;transform:scaleX(0.908)">Dessin</span>
</div>
<div id="principal" class="tl" style="top:96px;font-size:9px;color:#222;-webkit-text-stroke:0.15px #222;">
<span style="left:97.02px;transform:scaleX(1.037)">Principal:</span>
</div>
<!--T1-->
<!-- RIGHT BLUE LINE -->
<div class="abs" style="left:1038px;top:5px;width:1px;height:589.5px;background:#6d93dc;"></div>
</body>
</html>
